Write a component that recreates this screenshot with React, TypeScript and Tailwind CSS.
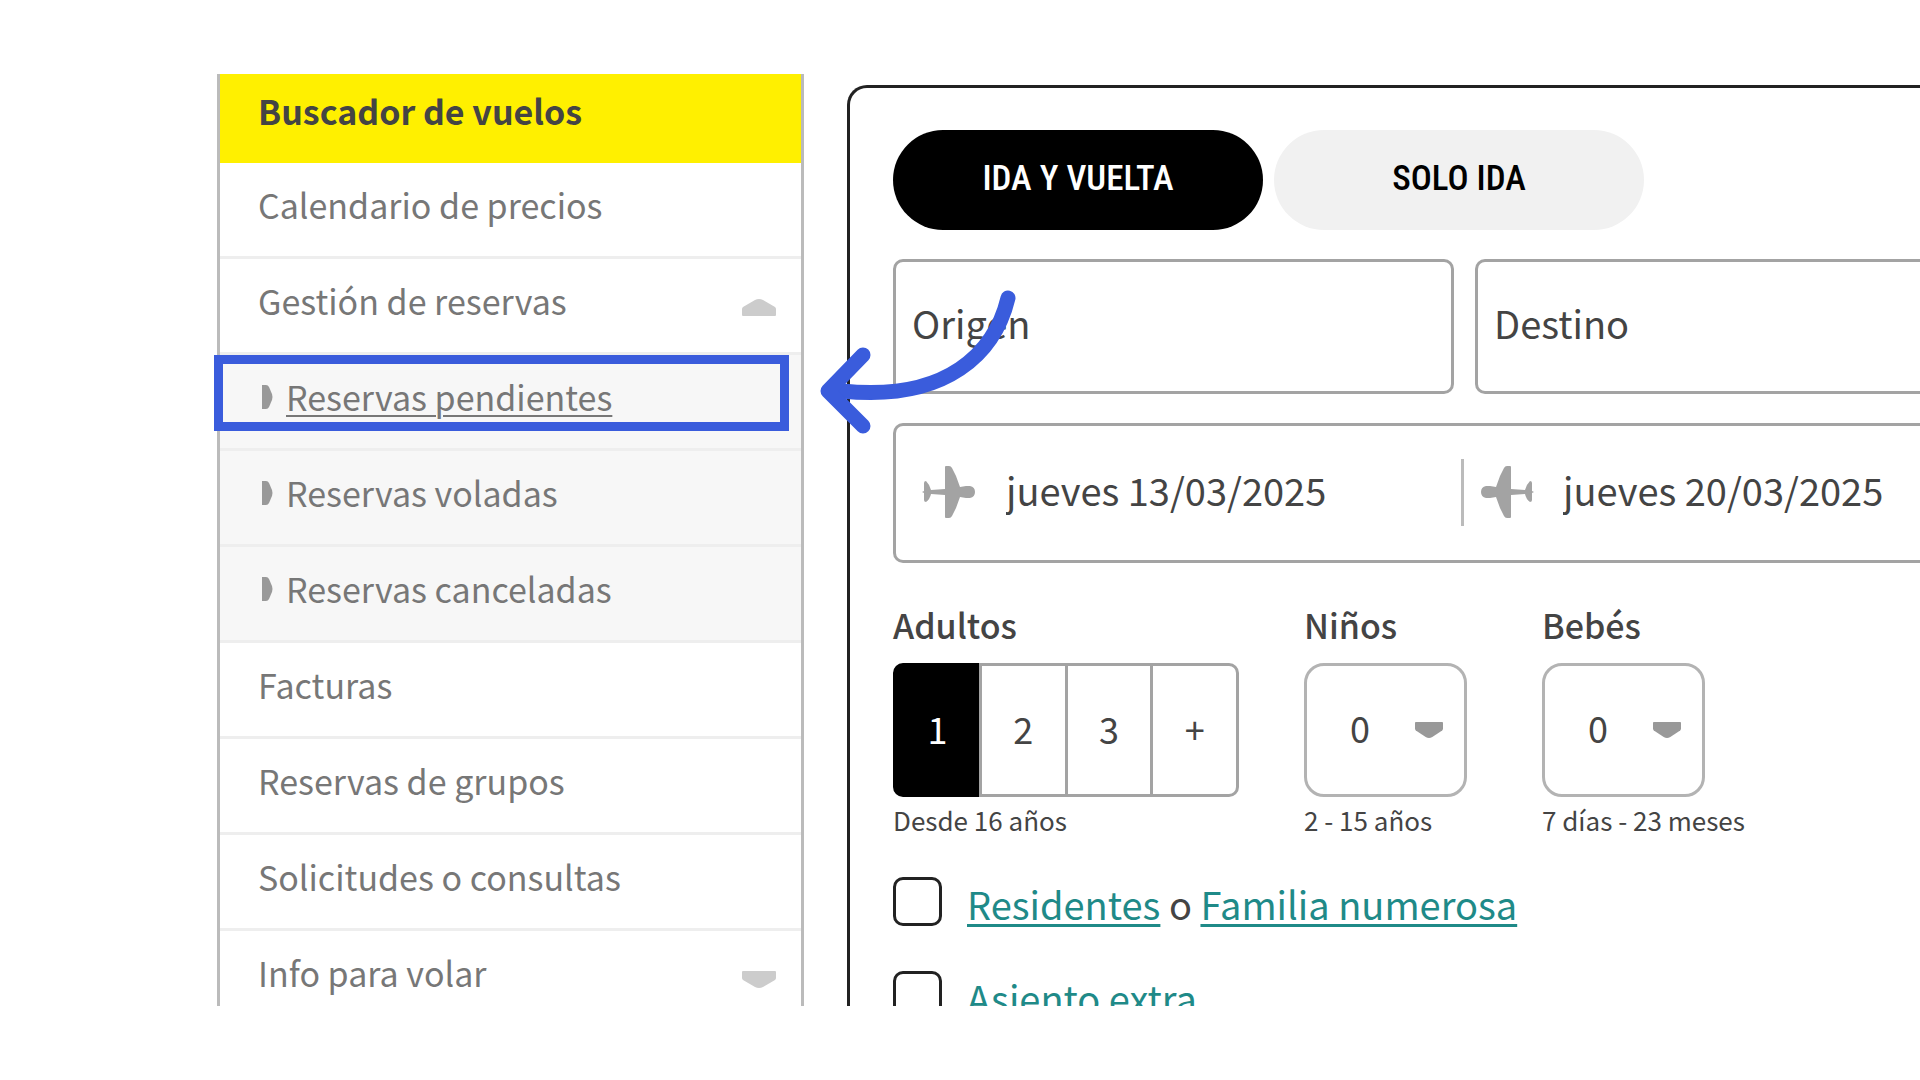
import { useState } from "react";
import clsx from "clsx";

interface MenuItem {
  label: string;
  child?: boolean;
  marked?: boolean;
  caret?: "up" | "down";
}

const menu: MenuItem[] = [
  { label: "Calendario de precios" },
  { label: "Gestión de reservas", caret: "up" },
  { label: "Reservas pendientes", child: true, marked: true },
  { label: "Reservas voladas", child: true },
  { label: "Reservas canceladas", child: true },
  { label: "Facturas" },
  { label: "Reservas de grupos" },
  { label: "Solicitudes o consultas" },
  { label: "Info para volar", caret: "down" },
];

const fieldClass =
  "h-[135px] min-w-0 border-[3px] border-[#a3a3a3] px-4 pb-2 text-[38px] text-[#444] outline-none placeholder:text-[#444] placeholder:opacity-100";

function Caret({ up, className }: { up?: boolean; className?: string }) {
  return (
    <svg
      width="34"
      height="17"
      viewBox="0 0 34 17"
      preserveAspectRatio="none"
      fill="currentColor"
      className={clsx(up && "rotate-180", className)}
    >
      <path d="M1 0h32q1 0 1 1v6q0 1-1 2l-12 7q-4 2-8 0L1 9Q0 8 0 7V1q0-1 1-1z" />
    </svg>
  );
}

function Plane({ back }: { back?: boolean }) {
  return (
    <svg width="54" height="52" viewBox="0 0 54 52" className={clsx("shrink-0 text-[#a3a3a3]", back && "-scale-x-100")}>
      <path
        fill="currentColor"
        d="M23 1q0-1 1-1h3q2 0 3 2l4 8 4 11 6-1h4q5 1 5 6t-5 6h-4l-6-1-4 11-4 8q-1 2-3 2h-3q-1 0-1-1V29L9 28q-1 5-5 8-2 0-2-2v-7l-2-1 2-1v-8q0-2 2-2 4 4 5 9l14-1z"
      />
    </svg>
  );
}

// blue frame around the menu entry plus the arrow that points at it
function Highlight() {
  return (
    <div className="pointer-events-none absolute -left-[6px] top-0 z-10 h-[76px] w-[575px] border-[9px] border-[#3a5cdc]">
      <svg
        width="200"
        height="150"
        viewBox="0 0 200 150"
        fill="none"
        stroke="#3a5cdc"
        strokeWidth="15"
        strokeLinecap="round"
        strokeLinejoin="round"
        className="absolute -top-[74px] left-[595px]"
      >
        <path d="M190 8C177 62 130 112 24 101" />
        <path d="M45 65L10 101l35 35" />
      </svg>
    </div>
  );
}

function Sidebar() {
  return (
    <nav className="w-[587px] shrink-0 border-x-[3px] border-[#bbb] text-[34px] text-[#777]">
      <a href="#vuelos" className="flex h-[89px] items-center bg-[#fff000] pb-4 pl-[38px] font-bold text-[#444]">
        Buscador de vuelos
      </a>
      <ul>
        {menu.map((item) => (
          <li
            key={item.label}
            className={clsx(
              "relative flex h-24 items-center border-b-[3px] border-[#eee] pb-2.5 pl-[38px] pr-[25px]",
              item.child && "bg-[#f7f7f7]"
            )}
          >
            {item.child && (
              <svg width="12" height="24" viewBox="0 0 12 24" className="mr-3 ml-1 text-[#999]">
                <path fill="currentColor" d="M0 0h4q2 0 3 2l3 7q1 3 0 6l-3 7q-1 2-3 2H0z" />
              </svg>
            )}
            <a href="#menu" className={clsx("flex-1", item.marked && "underline decoration-2 underline-offset-4")}>
              {item.label}
            </a>
            {item.caret && <Caret up={item.caret === "up"} className="mt-3.5 text-[#ccc]" />}
            {item.marked && <Highlight />}
          </li>
        ))}
      </ul>
    </nav>
  );
}

function AdultPicker() {
  const [adults, setAdults] = useState("1");
  return (
    <div className="w-[346px]">
      <h3 className="text-[34px] leading-10 font-medium">Adultos</h3>
      <div className="mt-[18px] flex h-[134px]">
        {["1", "2", "3", "+"].map((n) => (
          <button
            type="button"
            key={n}
            onClick={() => setAdults(n)}
            className={clsx(
              "flex-1 border-[3px] pb-1 text-[36px] not-first:-ml-[3px] first:rounded-l-[10px] last:rounded-r-[10px]",
              adults === n ? "border-black bg-black text-white" : "border-[#a3a3a3]"
            )}
          >
            {n}
          </button>
        ))}
      </div>
      <p className="mt-[5px] text-[26px] leading-9">Desde 16 años</p>
    </div>
  );
}

function CountSelect({ id, label, hint }: { id: string; label: string; hint: string }) {
  return (
    <div className="w-[238px] shrink-0">
      <label htmlFor={id} className="block text-[34px] leading-10 font-medium">
        {label}
      </label>
      <div className="relative mt-[18px] h-[134px] w-[163px]">
        <select
          id={id}
          className="size-full appearance-none rounded-[20px] border-[3px] border-[#b3b3b3] bg-white pb-1.5 pl-[43px] text-[36px]"
        >
          {[0, 1, 2, 3, 4].map((n) => (
            <option key={n}>{n}</option>
          ))}
        </select>
        <Caret className="pointer-events-none absolute top-[59px] right-6 h-4 w-7 text-[#999]" />
      </div>
      <p className="mt-[5px] whitespace-nowrap text-[26px] leading-9">{hint}</p>
    </div>
  );
}

const linkClass = "text-[#1f8a88] underline decoration-[3px] underline-offset-4";
const checkClass = "size-[49px] shrink-0 appearance-none rounded-[10px] border-[3px] border-[#222] checked:bg-black";

function SearchForm() {
  const [trip, setTrip] = useState("IDA Y VUELTA");
  return (
    <form className="mt-[11px] ml-[43px] min-w-0 flex-1 rounded-tl-[20px] border-t-[3px] border-l-[3px] border-[#222] pt-[42px] pl-[43px] text-[#444]">
      <div className="flex gap-[11px]">
        {["IDA Y VUELTA", "SOLO IDA"].map((t) => (
          <button
            type="button"
            key={t}
            onClick={() => setTrip(t)}
            className={clsx(
              "h-[100px] w-[370px] rounded-full pb-0.5 font-['Roboto_Condensed','Liberation_Sans_Narrow',sans-serif] text-[35px] font-medium",
              trip === t ? "bg-black text-white" : "bg-[#f1f1f1] text-black"
            )}
          >
            {t}
          </button>
        ))}
      </div>

      <div className="mt-[29px] flex gap-[21px]">
        <input aria-label="Origen" placeholder="Origen" className={clsx(fieldClass, "w-[561px] shrink-0 rounded-[10px]")} />
        <input aria-label="Destino" placeholder="Destino" className={clsx(fieldClass, "flex-1 rounded-l-[10px] border-r-0")} />
      </div>

      <div className="mt-[29px] flex h-[140px] items-center rounded-l-[10px] border-[3px] border-r-0 border-[#a3a3a3] pb-0.5 pl-[26px] text-[38px]">
        <Plane />
        <input aria-label="Ida" defaultValue="jueves 13/03/2025" className="ml-[30px] w-[455px] shrink-0 pb-1.5 outline-none" />
        <div className="mr-4 h-[67px] w-[3px] shrink-0 bg-[#bbb]" />
        <Plane back />
        <input aria-label="Vuelta" defaultValue="jueves 20/03/2025" className="ml-[29px] min-w-0 flex-1 pb-1.5 outline-none" />
      </div>

      <div className="mt-[42px] flex">
        <AdultPicker />
        <div className="ml-[65px] flex">
          <CountSelect id="ninos" label="Niños" hint="2 - 15 años" />
          <CountSelect id="bebes" label="Bebés" hint="7 días - 23 meses" />
        </div>
      </div>

      <div className="mt-[39px] flex h-[49px] items-center gap-[25px] text-[38px]">
        <input type="checkbox" id="residentes" className={checkClass} />
        <label htmlFor="residentes" className="pt-1">
          <a href="#residentes" className={linkClass}>Residentes</a> o{" "}
          <a href="#familia" className={linkClass}>Familia numerosa</a>
        </label>
      </div>
      <div className="mt-[45px] flex h-[49px] items-center gap-[25px] text-[38px]">
        <input type="checkbox" id="asiento" className={checkClass} />
        <label htmlFor="asiento" className="pt-1">
          <a href="#asiento" className={linkClass}>Asiento extra</a>
        </label>
      </div>
    </form>
  );
}

export default function App() {
  return (
    <div className="h-screen bg-white py-[74px] font-['Noto_Sans_CJK_JP',sans-serif]">
      <main className="flex h-full overflow-hidden pl-[217px]">
        <Sidebar />
        <SearchForm />
      </main>
    </div>
  );
}
